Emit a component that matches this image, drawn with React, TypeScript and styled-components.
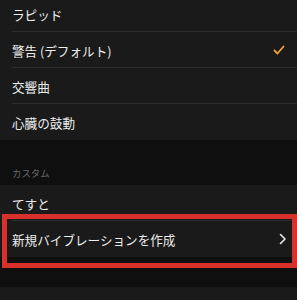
import styled, { createGlobalStyle } from "styled-components";

const GlobalStyle = createGlobalStyle`
  html, body {
    margin: 0;
    padding: 0;
    background: #0f0f0f;
  }
  body {
    font-family: "Noto Sans CJK JP", "Noto Sans", sans-serif;
  }
`;

const Page = styled.div`
  position: relative;
  width: 297px;
  height: 300px;
  overflow: hidden;
  background: #0f0f0f;
`;

const Inner = styled.div`
  margin-top: -4px;
`;

const Group = styled.div`
  background: #1a1a1a;
`;

const Row = styled.div<{ $last?: boolean }>`
  position: relative;
  height: 36px;
  display: flex;
  align-items: center;
  justify-content: space-between;
  padding: 0 12px;
  color: #ededed;
  font-size: 12.6px;

  &::after {
    content: "";
    display: ${(p) => (p.$last ? "none" : "block")};
    position: absolute;
    left: 12px;
    right: 0;
    bottom: 0;
    height: 1px;
    background: #2d2d2d;
  }
`;

const SectionHeader = styled.div`
  height: 45px;
  box-sizing: border-box;
  display: flex;
  align-items: flex-end;
  padding: 0 12px 5px;
  color: #6b6b6b;
  font-size: 9.4px;
`;

const Gap = styled.div`
  height: 30px;
`;

const Highlight = styled.div`
  position: absolute;
  left: 2px;
  right: 0;
  top: 214px;
  height: 54px;
  box-sizing: border-box;
  border: 5px solid #d8302b;
`;

const Check = () => (
  <svg width="12" height="10" viewBox="0 0 12 10">
    <path
      d="M1.5 5.5 L4.5 8.5 L10.5 1.5"
      fill="none"
      stroke="#f2a233"
      strokeWidth="1.8"
      strokeLinecap="round"
      strokeLinejoin="round"
    />
  </svg>
);

const Chevron = () => (
  <svg width="8" height="12" viewBox="0 0 8 12" style={{ marginRight: -2 }}>
    <path
      d="M1.5 1.5 L6 6 L1.5 10.5"
      fill="none"
      stroke="#e8e8e8"
      strokeWidth="1.6"
      strokeLinecap="round"
      strokeLinejoin="round"
    />
  </svg>
);

export default function App() {
  return (
    <Page>
      <GlobalStyle />
      <Inner>
        <Group>
          <Row>ラピッド</Row>
          <Row>
            警告 (デフォルト)
            <Check />
          </Row>
          <Row>交響曲</Row>
          <Row $last>心臓の鼓動</Row>
        </Group>
        <SectionHeader>カスタム</SectionHeader>
        <Group>
          <Row>てすと</Row>
          <Row $last>
            新規バイブレーションを作成
            <Chevron />
          </Row>
        </Group>
        <Gap />
        <Group>
          <Row $last />
        </Group>
      </Inner>
      <Highlight />
    </Page>
  );
}
